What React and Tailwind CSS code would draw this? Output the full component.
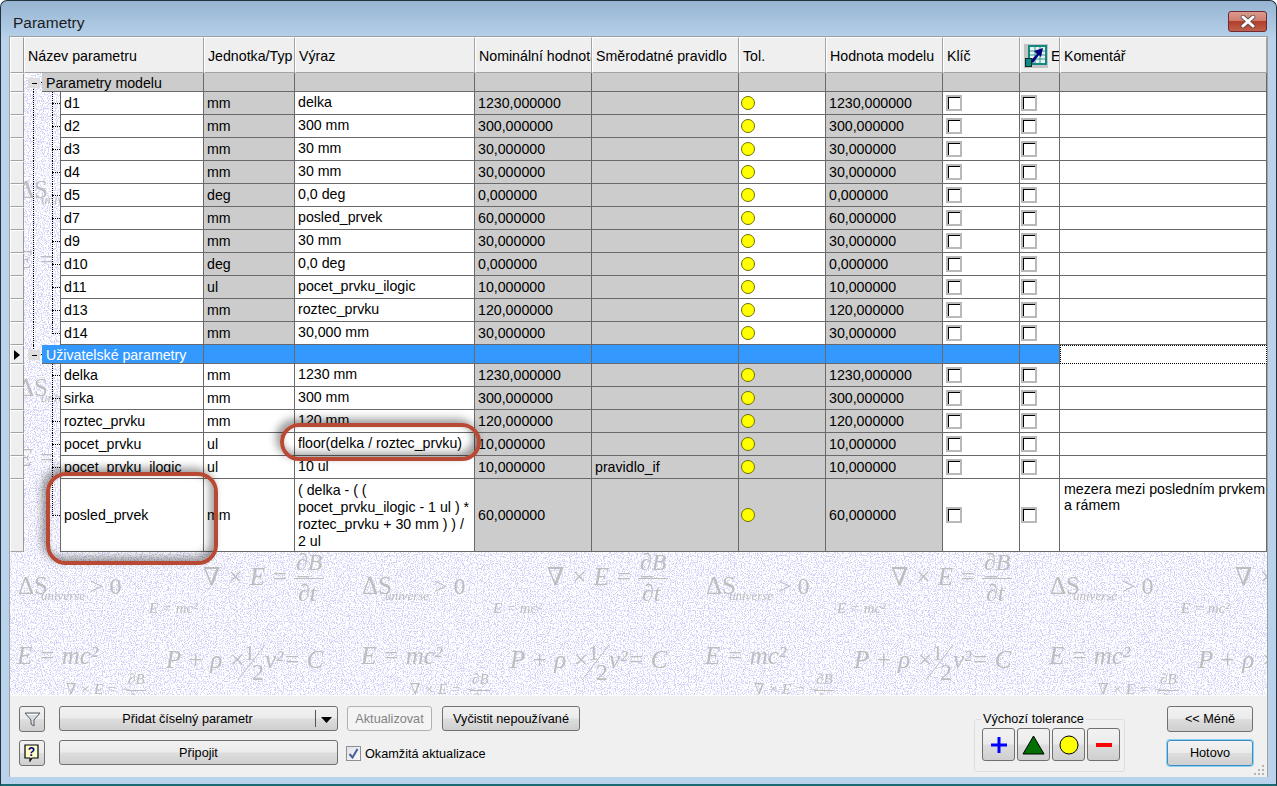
const modelRows = [
  ["d1", "mm", "delka", "1230,000000"],
  ["d2", "mm", "300 mm", "300,000000"],
  ["d3", "mm", "30 mm", "30,000000"],
  ["d4", "mm", "30 mm", "30,000000"],
  ["d5", "deg", "0,0 deg", "0,000000"],
  ["d7", "mm", "posled_prvek", "60,000000"],
  ["d9", "mm", "30 mm", "30,000000"],
  ["d10", "deg", "0,0 deg", "0,000000"],
  ["d11", "ul", "pocet_prvku_ilogic", "10,000000"],
  ["d13", "mm", "roztec_prvku", "120,000000"],
  ["d14", "mm", "30,000 mm", "30,000000"],
];

const userRows = [
  ["delka", "mm", "1230 mm", "1230,000000"],
  ["sirka", "mm", "300 mm", "300,000000"],
  ["roztec_prvku", "mm", "120 mm", "120,000000"],
  ["pocet_prvku", "ul", "floor(delka / roztec_prvku)", "10,000000"],
  ["pocet_prvku_ilogic", "ul", "10 ul", "10,000000", "pravidlo_if"],
];

const line = "border-r border-b border-[#696969]";
const gray = "bg-[#cccccc]";

function Cell({ w, className = "", children }) {
  return (
    <div className={`${w} ${line} ${className} shrink-0 h-full flex items-center pl-[3px] pt-[2px] overflow-hidden whitespace-nowrap`}>
      {children}
    </div>
  );
}

function HeadCell({ w, className = "", children }) {
  return (
    <div className={`${w} ${className} shrink-0 h-full flex items-center pl-[3px] pt-[4px] overflow-hidden whitespace-nowrap bg-[#efefef] border-r border-b border-r-[#a3a3a3] border-b-[#a3a3a3] border-l border-l-white border-t border-t-white`}>
      {children}
    </div>
  );
}

function RowHead({ children }) {
  return (
    <div className="w-[14px] shrink-0 h-full bg-[#efefef] border-l border-l-white border-t border-t-white border-r border-r-[#9a9a9a] border-b border-b-[#a3a3a3] flex items-center justify-center">
      {children}
    </div>
  );
}

function Check({ className = "" }) {
  return (
    <div className={`${className} mt-[-2px] w-[16px] h-[16px] shrink-0 bg-white border-2 border-[#b9b9b9]`}>
      <div className="w-full h-full border-t border-l border-black" />
    </div>
  );
}

function Dot() {
  return <div className="ml-[-1px] mt-[-2px] w-[14px] h-[14px] rounded-full bg-[#ffff00] border border-[#6f6f00]" />;
}

function Tree({ outer, last }) {
  return (
    <div className="w-[36px] shrink-0 h-full relative">
      {outer && <span className="absolute left-[9px] top-0 bottom-0 border-l border-dotted border-black" />}
      <span className={`absolute left-[28px] top-0 border-l border-dotted border-black ${last ? "h-[12px]" : "bottom-0"}`} />
      <span className="absolute left-[28px] top-[11px] w-[8px] border-t border-dotted border-black" />
    </div>
  );
}

function TreeTall() {
  return (
    <div className="w-[36px] shrink-0 h-full relative">
      <span className="absolute left-[28px] top-0 h-[37px] border-l border-dotted border-black" />
      <span className="absolute left-[28px] top-[36px] w-[8px] border-t border-dotted border-black" />
    </div>
  );
}

function Group({ title, selected, outerTop }) {
  const bg = selected ? "bg-[#3399ff] text-white" : gray;
  return (
    <div className="flex h-[19px]">
      <RowHead>
        {selected && (
          <svg width="6" height="10" viewBox="0 0 6 10">
            <path d="M0 0 L6 5 L0 10 Z" fill="#000" />
          </svg>
        )}
      </RowHead>
      <div className="w-[18px] shrink-0 h-full relative">
        {outerTop && <span className="absolute left-[9px] top-0 h-[6px] border-l border-dotted border-black" />}
        {!selected && <span className="absolute left-[9px] top-[14px] bottom-0 border-l border-dotted border-black" />}
        <span className="absolute left-[15px] top-[9px] w-[3px] border-t border-dotted border-black" />
        <span className="absolute left-[4px] top-[5px] w-[12px] h-[10px] bg-[#dedede] flex items-center justify-center">
          <span className="w-[5px] h-px bg-black" />
        </span>
      </div>
      <div className={`w-[162px] ${bg} border-b border-r border-[#696969] shrink-0 h-full flex items-center pl-[4px] pt-[3px] whitespace-nowrap`}>{title}</div>
      <Cell w="w-[91px]" className={bg} />
      <Cell w="w-[180px]" className={bg} />
      <Cell w="w-[117px]" className={bg} />
      <Cell w="w-[147px]" className={bg} />
      <Cell w="w-[87px]" className={bg} />
      <Cell w="w-[117px]" className={bg} />
      <Cell w="w-[77px]" className={bg} />
      <Cell w="w-[40px]" className={bg} />
      {selected ? (
        <div className="w-[207px] shrink-0 h-full bg-white border border-dotted border-black" />
      ) : (
        <Cell w="w-[207px]" className={bg} />
      )}
    </div>
  );
}

function ParamRow({ row, outer, last, user }) {
  const [name, unit, expr, value, rule] = row;
  const unitBg = user ? "bg-white" : gray;
  const tolBg = user ? gray : "bg-white";
  return (
    <div className="flex h-[23px]">
      <RowHead />
      <Tree outer={outer} last={last} />
      <Cell w="w-[144px]" className="bg-white border-l">{name}</Cell>
      <Cell w="w-[91px]" className={unitBg}>{unit}</Cell>
      <Cell w="w-[180px]" className="bg-white !pt-0">{expr}</Cell>
      <Cell w="w-[117px]" className={gray}>{value}</Cell>
      <Cell w="w-[147px]" className={gray}>{rule}</Cell>
      <Cell w="w-[87px]" className={tolBg}><Dot /></Cell>
      <Cell w="w-[117px]" className={gray}>{value}</Cell>
      <Cell w="w-[77px]" className="bg-white"><Check /></Cell>
      <Cell w="w-[40px]" className="bg-white"><Check className="ml-[-2px]" /></Cell>
      <Cell w="w-[207px]" className="bg-white" />
    </div>
  );
}

function LastRow() {
  return (
    <div className="flex h-[73px]">
      <RowHead />
      <TreeTall />
      <Cell w="w-[144px]" className="bg-white border-l">posled_prvek</Cell>
      <Cell w="w-[91px]" className="bg-white">mm</Cell>
      <Cell w="w-[180px]" className="bg-white leading-[17px]">
        <div>
          ( delka - ( (<br />
          pocet_prvku_ilogic - 1 ul ) *<br />
          roztec_prvku + 30 mm ) ) /<br />
          2 ul
        </div>
      </Cell>
      <Cell w="w-[117px]" className={gray}>60,000000</Cell>
      <Cell w="w-[147px]" className={gray} />
      <Cell w="w-[87px]" className={gray}><Dot /></Cell>
      <Cell w="w-[117px]" className={gray}>60,000000</Cell>
      <Cell w="w-[77px]" className="bg-white"><Check /></Cell>
      <Cell w="w-[40px]" className="bg-white"><Check className="ml-[-2px]" /></Cell>
      <Cell w="w-[207px]" className="bg-white !items-start leading-[16px] pl-[4px]">
        <div>
          mezera mezi posledním prvkem<br />a rámem
        </div>
      </Cell>
    </div>
  );
}

function SheetIcon() {
  return (
    <svg width="24" height="24" viewBox="0 0 24 24" className="shrink-0 mt-[-3px]">
      <rect width="24" height="24" fill="#c4c4c4" />
      <rect x="4" y="1" width="19" height="20" fill="#0f8a80" />
      <rect x="6" y="3" width="15" height="16" fill="#e8f3ef" />
      <path d="M6 7h15M6 11h15M6 15h15M11 3v16M16 3v16" stroke="#2c9a8f" strokeWidth="1" />
      <path d="M6 17 L13 10 L10 7 L19 4 L17 13 L15 11 L9 19 Z" fill="#000080" />
      <rect x="1.5" y="14.5" width="6" height="8" fill="#0d8c84" stroke="#0b2a2a" />
    </svg>
  );
}

function Equations() {
  const serif = { fontFamily: '"Liberation Serif", "DejaVu Serif", serif' };
  return (
    <svg className="absolute inset-0" width="1257" height="658" viewBox="10 37 1257 658">
      <defs>
        <filter id="speckle" x="0" y="0" width="100%" height="100%" colorInterpolationFilters="sRGB">
          <feTurbulence type="fractalNoise" baseFrequency="0.85" numOctaves="2" seed="4" />
          <feColorMatrix values="0 0 0 0 0.82  0 0 0 0 0.82  0 0 0 0 0.97  7 0 0 0 -3.4" />
        </filter>
        <filter id="soft">
          <feGaussianBlur stdDeviation="0.35" />
        </filter>
        <pattern id="eq" patternUnits="userSpaceOnUse" x="0" y="553" width="344" height="198">
          <g fill="#bdbdbd" style={serif} transform="translate(0 -553)">
            <text x="18" y="594" fontSize="25">ΔS</text>
            <text x="41" y="600" fontSize="13" fontStyle="italic">universe</text>
            <text x="90" y="594" fontSize="24">&gt; 0</text>
            <text x="203" y="585" fontSize="25" fontStyle="italic">∇ × E = −</text>
            <text x="296" y="570" fontSize="24" fontStyle="italic">∂B</text>
            <rect x="294" y="578" width="30" height="1" />
            <text x="298" y="601" fontSize="24" fontStyle="italic">∂t</text>
            <text x="149" y="613" fontSize="15" fontStyle="italic">E = mc²</text>
            <text x="17" y="664" fontSize="25" fontStyle="italic">E = mc²</text>
            <text x="166" y="668" fontSize="25" fontStyle="italic">P + ρ ×</text>
            <text x="244" y="660" fontSize="22">1</text>
            <path d="M238 680 L265 645" stroke="#bdbdbd" strokeWidth="1" />
            <text x="252" y="680" fontSize="24">2</text>
            <text x="265" y="668" fontSize="25" fontStyle="italic">v²= C</text>
            <text x="66" y="694" fontSize="15" fontStyle="italic">∇ × E = −</text>
            <text x="128" y="684" fontSize="15" fontStyle="italic">∂B</text>
            <rect x="126" y="690" width="20" height="1" />
            <text x="129" y="704" fontSize="15" fontStyle="italic">∂t</text>
          </g>
        </pattern>
      </defs>
      <rect x="10" y="37" width="1257" height="658" fill="#ffffff" />
      <rect x="10" y="37" width="1257" height="658" filter="url(#speckle)" />
      <rect x="10" y="37" width="1257" height="658" fill="url(#eq)" filter="url(#soft)" />
    </svg>
  );
}

const btn =
  "flex items-center justify-center border border-[#707070] rounded-[3px] bg-[linear-gradient(180deg,#f2f2f2_0%,#ebebeb_48%,#dddddd_52%,#cfcfcf_100%)]";

function FilterIcon() {
  return (
    <svg width="17" height="17" viewBox="0 0 17 17">
      <path d="M1 2 H16 L10 9 V15 L7 13 V9 Z" fill="#d8dde2" stroke="#555a62" strokeWidth="1" />
      <path d="M3 3.5 H14" stroke="#fff" />
    </svg>
  );
}

function HelpIcon() {
  return (
    <svg width="16" height="18" viewBox="0 0 16 18">
      <path d="M1 1 H14 V14 H8 L6 17 V14 H1 Z" fill="#ffffc8" stroke="#000" strokeWidth="1.2" />
      <text x="7.5" y="12" textAnchor="middle" fontSize="12" fontWeight="700" fill="#000080" fontFamily="Liberation Sans, sans-serif">?</text>
    </svg>
  );
}

function Grip() {
  const dots = [[10, 0], [6, 4], [10, 4], [2, 8], [6, 8], [10, 8]];
  return (
    <svg width="13" height="11" viewBox="0 0 13 11" className="absolute right-[2px] bottom-[1px]">
      {dots.map(([x, y]) => (
        <rect key={`${x}-${y}`} x={x} y={y} width="2" height="2" fill="#b4b4b4" />
      ))}
    </svg>
  );
}

export default function App() {
  return (
    <div className="w-[1277px] h-[786px] overflow-hidden bg-white text-[14.2px] text-black" style={{ fontFamily: '"Liberation Sans", sans-serif' }}>
      <div className="h-full flex flex-col rounded-t-[7px] border border-[#23323c] border-b-2 border-b-[#1b6a72] bg-[linear-gradient(180deg,#96b4d1_0px,#b9d3ec_40px,#b9d3ec_100%)] px-[8px] pb-[7px]">
        {/* Titulek */}
        <div className="h-[35px] shrink-0 flex items-start justify-between">
          <span className="text-[15.5px] mt-[12px] ml-[4px] leading-[20px] text-[#1c1c1c]">Parametry</span>
          <button className="mt-[10px] mr-[1px] w-[39px] h-[21px] rounded-[3px] border border-[#6b2a35] bg-[linear-gradient(180deg,#dc9a8e_0%,#cf7d6f_45%,#b23f2a_50%,#c0604c_100%)] flex items-center justify-center">
            <svg width="16" height="13" viewBox="0 0 16 13">
              <path d="M3 2 L13 11 M13 2 L3 11" stroke="#5a4a4a" strokeWidth="4.5" strokeLinecap="round" />
              <path d="M3 2 L13 11 M13 2 L3 11" stroke="#fff" strokeWidth="3" strokeLinecap="round" />
            </svg>
          </button>
        </div>

        {/* Tabulka parametru */}
        <div className="flex-1 flex flex-col border-t border-l border-r border-[#a0a0a0] min-h-0">
          <div className="relative h-[658px] shrink-0 overflow-hidden">
            <Equations />
            <div className="relative">
              <div className="flex h-[36px]">
                <RowHead />
                <HeadCell w="w-[180px]">Název parametru</HeadCell>
                <HeadCell w="w-[91px]">Jednotka/Typ</HeadCell>
                <HeadCell w="w-[180px]">Výraz</HeadCell>
                <HeadCell w="w-[117px]">Nominální hodnota</HeadCell>
                <HeadCell w="w-[147px]">Směrodatné pravidlo</HeadCell>
                <HeadCell w="w-[87px]">Tol.</HeadCell>
                <HeadCell w="w-[117px]">Hodnota modelu</HeadCell>
                <HeadCell w="w-[77px]">Klíč</HeadCell>
                <HeadCell w="w-[40px]">
                  <SheetIcon />
                  <span className="ml-[3px]">E</span>
                </HeadCell>
                <HeadCell w="w-[207px]">Komentář</HeadCell>
              </div>
              <Group title="Parametry modelu" />
              {modelRows.map((row, i) => (
                <ParamRow key={row[0]} row={row} outer last={i === modelRows.length - 1} />
              ))}
              <Group title="Uživatelské parametry" selected outerTop />
              {userRows.map((row) => (
                <ParamRow key={row[0]} row={row} user />
              ))}
              <LastRow />
            </div>

            {/* Cervene zvyrazneni */}
            <div className="absolute left-[36px] top-[435px] w-[172px] h-[93px] rounded-[20px] border-4 border-[#b84a35] shadow-[-4px_-4px_8px_rgba(0,0,0,0.4),inset_-4px_-4px_8px_rgba(0,0,0,0.4)]" />
            <div className="absolute left-[270px] top-[386px] w-[201px] h-[38px] rounded-full border-4 border-[#b84a35] shadow-[-4px_-4px_8px_rgba(0,0,0,0.4),inset_-4px_-4px_8px_rgba(0,0,0,0.4)]" />
          </div>

          {/* Spodni lista */}
          <div className="relative flex-1 bg-[#f0f0f0] border-t border-[#fbfbfb] flex pl-[9px] pt-[10px] pr-[14px] text-[12.7px]">
            <div className="w-[26px] flex flex-col gap-[8px]">
              <div className={`${btn} h-[26px]`}><FilterIcon /></div>
              <div className={`${btn} h-[26px]`}><HelpIcon /></div>
            </div>
            <div className="w-[279px] ml-[14px] flex flex-col gap-[9px]">
              <div className={`${btn} h-[25px] relative pt-[2px]`}>
                <span className="pr-[22px]">Přidat číselný parametr</span>
                <span className="absolute right-[21px] top-[3px] bottom-[3px] w-px bg-[#555555]" />
                <svg width="11" height="6" viewBox="0 0 11 6" className="absolute right-[5px] top-[10px]">
                  <path d="M0 0 H11 L5.5 6 Z" fill="#000" />
                </svg>
              </div>
              <div className={`${btn} h-[25px] pt-[2px]`}>Připojit</div>
            </div>
            <div className="ml-[8px] flex flex-col gap-[14px]">
              <div className="flex gap-[10px] ml-[1px]">
                <div className="w-[85px] h-[25px] pt-[2px] flex items-center justify-center border border-[#adb2b5] rounded-[3px] bg-[#f4f4f4] text-[#838383]">Aktualizovat</div>
                <div className={`${btn} w-[138px] h-[25px] pt-[2px]`}>Vyčistit nepoužívané</div>
              </div>
              <div className="flex items-center h-[16px]">
                <div className="w-[15px] h-[15px] border border-[#8e8f8f] bg-[linear-gradient(135deg,#dfe3ea,#fafafa)] flex items-center justify-center">
                  <svg width="11" height="11" viewBox="0 0 11 11">
                    <path d="M1.5 6 L4.5 9.5 L9.5 1" fill="none" stroke="#4a5f97" strokeWidth="2" />
                  </svg>
                </div>
                <span className="ml-[4px] mt-[3px]">Okamžitá aktualizace</span>
              </div>
            </div>
            <fieldset className="ml-auto mr-[42px] mt-[4px] w-[151px] h-[62px] border border-[#dcdfe2] rounded-[3px] flex gap-[2px] pl-[7px] pr-[4px]">
              <legend className="ml-[-1px] px-[2px] leading-[18px]">Výchozí tolerance</legend>
              <div className={`${btn} w-[33px] h-[33px]`}>
                <svg width="16" height="16" viewBox="0 0 16 16"><path d="M8 0 V16 M0 8 H16" stroke="#0000ff" strokeWidth="3" /></svg>
              </div>
              <div className={`${btn} w-[33px] h-[33px]`}>
                <svg width="23" height="20" viewBox="0 0 23 20"><path d="M11.5 1 L22 19 H1 Z" fill="#007000" stroke="#000" /></svg>
              </div>
              <div className={`${btn} w-[33px] h-[33px]`}>
                <svg width="20" height="20" viewBox="0 0 20 20"><circle cx="10" cy="10" r="9" fill="#ffff00" stroke="#000" /></svg>
              </div>
              <div className={`${btn} w-[33px] h-[33px]`}>
                <svg width="16" height="4" viewBox="0 0 16 4"><rect width="16" height="4" fill="#ff0000" /></svg>
              </div>
            </fieldset>
            <div className="w-[86px] flex flex-col gap-[8px]">
              <div className={`${btn} h-[26px] pt-[2px]`}>&lt;&lt; Méně</div>
              <div className={`${btn} h-[26px] pt-[2px] !border-[#3c8fc4] shadow-[0_0_0_1px_#8fd0f0]`}>Hotovo</div>
            </div>
            <Grip />
          </div>
        </div>
      </div>
    </div>
  );
}
